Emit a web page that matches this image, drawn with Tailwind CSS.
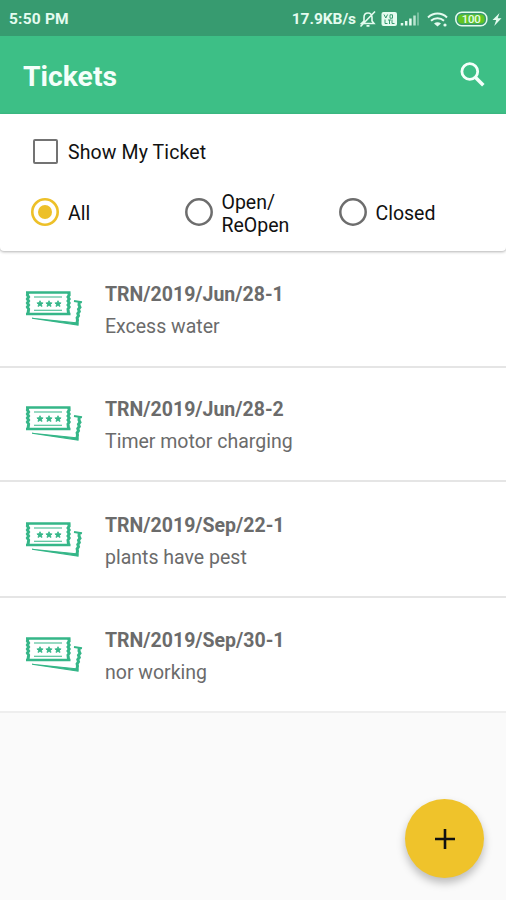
<!DOCTYPE html>
<html lang="en">
<head>
<meta charset="utf-8">
<title>Tickets</title>
<script src="https://cdn.jsdelivr.net/npm/@tailwindcss/browser@4"></script>
</head>
<body class="bg-[#fafafa]">
<svg class="hidden">
  <symbol id="ticket" viewBox="0 0 60 38">
    <g fill="none" stroke="#35b688">
      <path stroke-width="2.3" d="M2 3.500H46.500M2 25H46.500"/>
      <path stroke-width="3" d="M4 3.500l-.6 2.500 1.200 2-1.200 2 1.200 2-1.200 2 1.200 2-1.200 2 1.200 2-.6 5M44.600 3.500l.6 2.500-1.200 2 1.200 2-1.200 2 1.200 2-1.200 2 1.200 2-1.200 2 .6 5"/>
      <path stroke-width="1.100" d="M10 8H38M10 21.300H38"/>
      <path stroke-width="2" d="M50 12l8 1.200"/>
      <path stroke-width="3" d="M55.300 13l-.3 3 1 2.200-1.500 2 .8 2.300-1.500 2 .7 2.300-1.400 2 .4 2.300-.8 5"/>
      <path fill="#35b688" stroke-width="1.100" d="M8 29.300l46 4.700v2z"/>
    </g>
    <path fill="#35b688" stroke="#35b688" stroke-width=".8" d="M16 11.700l1 2 2.100.2-1.600 1.500.5 2.100-2-1.100-2 1.100.5-2.100-1.600-1.500 2.100-.2zM25 11.700l1 2 2.100.2-1.600 1.500.5 2.100-2-1.100-2 1.100.5-2.100-1.600-1.500 2.100-.2zM34 11.700l1 2 2.100.2-1.600 1.500.5 2.100-2-1.100-2 1.100.5-2.100-1.600-1.500 2.100-.2z"/>
  </symbol>
</svg>
<div class="relative flex h-[900px] w-[506px] flex-col overflow-hidden font-['Roboto',sans-serif]">
  <header class="flex h-9 shrink-0 items-center bg-[#379b70] pl-[9px] pt-0.5 text-[#e4fbef]">
    <span class="pt-0.5 text-[15.500px] font-bold tracking-[0.2px]">5:50 PM</span>
    <span class="ml-auto pt-0.5 text-[15.500px] font-bold tracking-[-0.05px]">17.9KB/s</span>
    <svg class="ml-[3px] h-[18px] w-[147px]" viewBox="0 0 147 18" fill="none" stroke="#e4fbef">
      <path stroke-width="1.600" d="M2.500 13.500h12.500l-2-2.500V7.500c0-2.800-1.600-4.500-4-4.500S5 4.700 5 7.500V11zM7.500 15.900h3M16 1.500L1.500 16.500"/>
      <rect x="22.500" y="2" width="15.500" height="14" rx="2" fill="#e4fbef" stroke="none"/>
      <path stroke="#379b70" stroke-width="1" d="M25 4.500l1.800 3.500 1.800-3.500M31 8.200V4.800h2.500v3.400zM26 9.500v4h2.500M29 10h3M30.500 10v4M33 9.500v4h2.500"/>
      <path stroke-width="2.500" d="M43 15.500v-2.500M47.200 15.500v-4.500M51.400 15.500v-7"/>
      <path stroke-width="2.500" opacity=".75" d="M55.500 15.500V5.500"/>
      <path stroke-width="2" opacity=".35" d="M59 15.500V2.500"/>
      <path stroke-width="2" d="M69 7.500c5.500-5.200 13.500-5.200 19 0M72 10.700c3.700-3.400 9.300-3.400 13 0"/>
      <path fill="#e4fbef" stroke="none" d="M75 13.500q3.500-2.500 7 0l-3.500 3z"/>
      <circle cx="86" cy="15" r="1.600" fill="#e4fbef" stroke="none"/>
      <rect x="96.800" y="2.300" width="31" height="13.400" rx="6" stroke-width="1.500"/>
      <rect x="99" y="4.500" width="26.600" height="9" rx="4" fill="#62c522" stroke="none"/>
      <text x="112.300" y="13" text-anchor="middle" fill="#e4fbef" stroke="none" font-size="11.500" font-weight="500" textLength="19">100</text>
      <path fill="#e4fbef" stroke="none" d="M139.500 3l-7 7h3.700l-2 6 7.300-7.800h-3.800z" transform="translate(1 0)"/>
    </svg>
  </header>
  <div class="flex h-[78px] shrink-0 items-center justify-between bg-[#3dbf86] pb-px pl-[23px] pr-[18px] pt-1">
    <h1 class="pt-0.5 text-[28.300px] font-bold text-[#f4fffa]">Tickets</h1>
    <svg class="mb-1 h-[30px] w-[30px]" viewBox="0 0 30 30" fill="none" stroke="#f4fffa"><circle cx="11.800" cy="11.500" r="7.900" stroke-width="2.800"/><path stroke-width="3.500" d="M17.300 17.300l8 8"/></svg>
  </div>
  <section class="relative flex h-[137px] shrink-0 flex-col rounded-b bg-white text-[19.500px] leading-[23px] text-[#111] shadow-[0_1px_3px_rgba(0,0,0,0.3)]">
    <label class="mt-[24px] flex h-[26px] items-center pl-[33px]"><span class="h-[25px] w-[25px] rounded-[2px] border-[2.500px] border-[#737373]"></span><span class="ml-2.5 pt-0.5 tracking-[0.12px]">Show My Ticket</span></label>
    <div class="mt-[23px] grid h-[48px] grid-cols-[153.500px_154px_1fr] items-center pl-[31px]">
      <label class="flex items-center"><svg class="h-7 w-7" viewBox="0 0 28 28"><circle cx="14" cy="14" r="12.700" fill="none" stroke="#edc029" stroke-width="2.600"/><circle cx="14" cy="14" r="7" fill="#edc029"/></svg><span class="ml-[9px] pt-[3px]">All</span></label>
      <label class="flex items-center"><svg class="h-7 w-7 shrink-0" viewBox="0 0 28 28"><circle cx="14" cy="14" r="12.700" fill="none" stroke="#6d6d6d" stroke-width="2.500"/></svg><span class="-mb-px ml-[9px] pt-1">Open/<br>ReOpen</span></label>
      <label class="flex items-center"><svg class="h-7 w-7" viewBox="0 0 28 28"><circle cx="14" cy="14" r="12.700" fill="none" stroke="#6d6d6d" stroke-width="2.500"/></svg><span class="ml-[9px] pt-[3px]">Closed</span></label>
    </div>
  </section>
  <main class="flex shrink-0 flex-col text-[19.500px] text-[#6b6b6b]">
    <div class="flex h-[117px] border-b-2 border-[#e5e5e5] bg-white pl-6 pt-[38px]"><svg class="h-[38px] w-[60px]"><use href="#ticket"/></svg><div class="ml-[21px] -mt-[10px] leading-[32px]"><p class="font-bold">TRN/2019/Jun/28-1</p><p>Excess water</p></div></div>
    <div class="flex h-[114px] border-b-2 border-[#e5e5e5] bg-white pl-6 pt-[36px]"><svg class="h-[38px] w-[60px]"><use href="#ticket"/></svg><div class="ml-[21px] -mt-[10px] leading-[32px]"><p class="font-bold">TRN/2019/Jun/28-2</p><p>Timer motor charging</p></div></div>
    <div class="flex h-[116px] border-b-2 border-[#e5e5e5] bg-white pl-6 pt-[38px]"><svg class="h-[38px] w-[60px]"><use href="#ticket"/></svg><div class="ml-[21px] -mt-[10px] leading-[32px]"><p class="font-bold">TRN/2019/Sep/22-1</p><p>plants have pest</p></div></div>
    <div class="flex h-[115px] border-b-2 border-[#eeeeee] bg-white pl-6 pt-[37px]"><svg class="h-[38px] w-[60px]"><use href="#ticket"/></svg><div class="ml-[21px] -mt-[10px] leading-[32px]"><p class="font-bold">TRN/2019/Sep/30-1</p><p>nor working</p></div></div>
  </main>
  <button class="absolute left-[405px] top-[799px] flex h-[79px] w-[79px] items-center justify-center rounded-full bg-[#efc32b] shadow-[0_5px_9px_rgba(0,0,0,0.25)]"><svg class="h-5 w-5" viewBox="0 0 20 20" stroke="#111" stroke-width="2.600"><path d="M10 0v20M0 10h20"/></svg></button>
</div>
</body>
</html>
